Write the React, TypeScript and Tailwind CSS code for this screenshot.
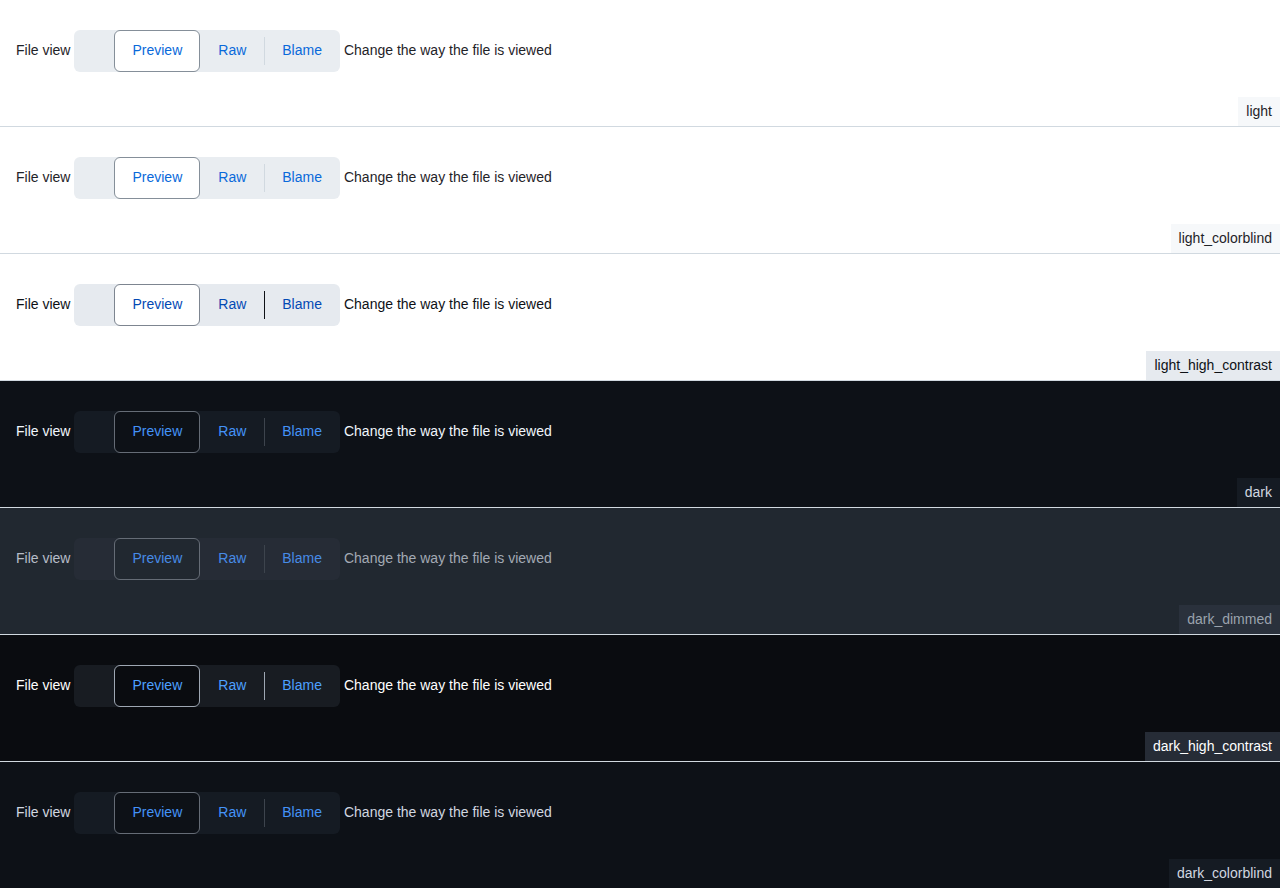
import React from 'react';

interface Theme {
  name: string;
  panel: string;
  label: string;
  control: string;
  selected: string;
  link: string;
  divider: string;
  caption: string;
  tag: string;
}

const themes: Theme[] = [
  {
    name: 'light',
    panel: 'bg-white',
    label: 'text-[#1f2328]',
    control: 'bg-[#e9edf1]',
    selected: 'bg-white border-[#858f99]',
    link: 'text-[#0969da]',
    divider: 'bg-[#d1d9e0]',
    caption: 'text-[#1f2328]',
    tag: 'bg-[#f6f8fa] text-[#1f2328]',
  },
  {
    name: 'light_colorblind',
    panel: 'bg-white',
    label: 'text-[#1f2328]',
    control: 'bg-[#e9edf1]',
    selected: 'bg-white border-[#858f99]',
    link: 'text-[#0969da]',
    divider: 'bg-[#d1d9e0]',
    caption: 'text-[#1f2328]',
    tag: 'bg-[#f6f8fa] text-[#1f2328]',
  },
  {
    name: 'light_high_contrast',
    panel: 'bg-white',
    label: 'text-[#0e1116]',
    control: 'bg-[#e6eaef]',
    selected: 'bg-white border-[#7d8590]',
    link: 'text-[#0349b4]',
    divider: 'bg-[#0e1116]',
    caption: 'text-[#0e1116]',
    tag: 'bg-[#e6eaef] text-[#0e1116]',
  },
  {
    name: 'dark',
    panel: 'bg-[#0d1117]',
    label: 'text-[#f0f6fc]',
    control: 'bg-[#151b23]',
    selected: 'bg-[#0d1117] border-[#656c76]',
    link: 'text-[#4493f8]',
    divider: 'bg-[#3d444d]',
    caption: 'text-[#f0f6fc]',
    tag: 'bg-[#151b23] text-[#d1d7e0]',
  },
  {
    name: 'dark_dimmed',
    panel: 'bg-[#212830]',
    label: 'text-[#b7bdc8]',
    control: 'bg-[#262c36]',
    selected: 'bg-[#212830] border-[#656c76]',
    link: 'text-[#478be6]',
    divider: 'bg-[#3d444d]',
    caption: 'text-[#a3aab4]',
    tag: 'bg-[#2a313c] text-[#9ba3ad]',
  },
  {
    name: 'dark_high_contrast',
    panel: 'bg-[#0a0c10]',
    label: 'text-[#ffffff]',
    control: 'bg-[#181c22]',
    selected: 'bg-[#0a0c10] border-[#9ea7b3]',
    link: 'text-[#4da0ff]',
    divider: 'bg-[#9ea7b3]',
    caption: 'text-[#ffffff]',
    tag: 'bg-[#262c36] text-[#ffffff]',
  },
  {
    name: 'dark_colorblind',
    panel: 'bg-[#0d1117]',
    label: 'text-[#d1d7e0]',
    control: 'bg-[#151b23]',
    selected: 'bg-[#0d1117] border-[#656c76]',
    link: 'text-[#4493f8]',
    divider: 'bg-[#3d444d]',
    caption: 'text-[#d1d7e0]',
    tag: 'bg-[#151b23] text-[#d1d7e0]',
  },
];

const ThemePanel: React.FC<{ theme: Theme }> = ({ theme }) => (
  <div className={`relative h-[127px] border-b border-[#d1d9e0] px-4 pt-[30px] ${theme.panel}`}>
    <div className="flex items-center gap-1 text-sm leading-5">
      <span className={`mb-0.5 ${theme.label}`}>File view</span>
      <div className={`flex h-[42px] items-center rounded-md ${theme.control}`}>
        <div className="w-10 h-full" />
        <button className={`h-full px-[17px] pb-0.5 rounded-md border ${theme.selected} ${theme.link}`}>Preview</button>
        <button className={`h-full px-[18px] pb-0.5 ${theme.link}`}>Raw</button>
        <div className={`w-px h-[28px] ${theme.divider}`} />
        <button className={`h-full pl-[17px] pr-[18px] pb-0.5 ${theme.link}`}>Blame</button>
      </div>
      <span className={`mb-0.5 ${theme.caption}`}>Change the way the file is viewed</span>
    </div>
    <span className={`absolute right-0 bottom-0 px-2 py-1 leading-[21px] text-sm ${theme.tag}`}>{theme.name}</span>
  </div>
);

export default function App() {
  return (
    <div className="h-[888px] overflow-hidden" style={{ fontFamily: '"Liberation Sans", Arial, sans-serif' }}>
      {themes.map((t) => (
        <ThemePanel key={t.name} theme={t} />
      ))}
    </div>
  );
}
